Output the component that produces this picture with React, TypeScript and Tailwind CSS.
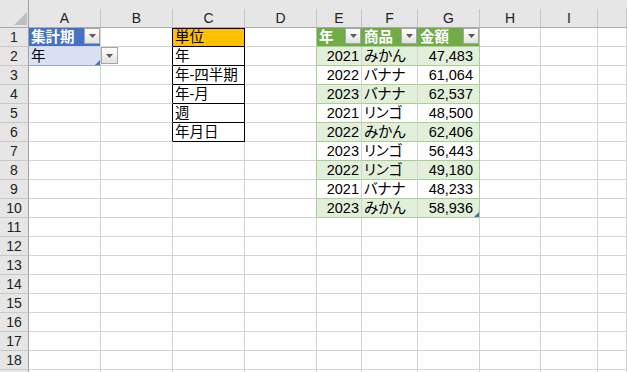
import React from "react";

const GRID =
  "grid grid-cols-[29px_72px_72px_72px_72px_45px_56px_62px_61px_57px_29px]";
const CELL =
  "relative flex items-center whitespace-nowrap overflow-hidden border-r border-b px-[2px]";
const GRIDLINE = "border-[#d4d4d4]";

// last column is only partly on screen, so no letter shows
const COLS = ["A", "B", "C", "D", "E", "F", "G", "H", "I", ""];

const units = ["単位", "年", "年-四半期", "年-月", "週", "年月日"];

const sales: [number, string, string][] = [
  [2021, "みかん", "47,483"],
  [2022, "バナナ", "61,064"],
  [2023, "バナナ", "62,537"],
  [2021, "リンゴ", "48,500"],
  [2022, "みかん", "62,406"],
  [2023, "リンゴ", "56,443"],
  [2022, "リンゴ", "49,180"],
  [2021, "バナナ", "48,233"],
  [2023, "みかん", "58,936"],
];

// small filter / list arrow button
const DropButton = ({ className }: { className: string }) => (
  <div
    className={`absolute flex items-center justify-center border border-[#a6a6a6] bg-gradient-to-b from-white to-[#e2e2e2] ${className}`}
  >
    <svg width="7" height="4" viewBox="0 0 7 4">
      <path d="M0 0h7L3.5 4z" fill="#5a5a5a" />
    </svg>
  </div>
);

// table resize corner
const Handle = ({ color }: { color: string }) => (
  <svg className="absolute right-0 bottom-0" width="5" height="5" viewBox="0 0 5 5">
    <path d="M5 0V5H0z" fill={color} />
  </svg>
);

const Cell = ({
  className = GRIDLINE,
  children,
}: {
  className?: string;
  children?: React.ReactNode;
}) => <div className={`${CELL} ${className}`}>{children}</div>;

const RowHead = ({ n }: { n?: number }) => (
  <div className="flex items-center justify-center bg-[#e6e6e6] border-r border-b border-r-[#9f9f9f] border-b-[#c8c8c8] text-[14px] text-[#222]">
    {n}
  </div>
);

function Row({ r }: { r: number }) {
  const unit = r <= 6 ? units[r - 1] : undefined;
  const inTable = r <= 10;
  const item = r >= 2 && r <= 10 ? sales[r - 2] : undefined;
  const band = r % 2 === 0;

  // column A
  let a: React.ReactNode = <Cell />;
  if (r === 1)
    a = (
      <Cell className="bg-[#4472c4] border-[#d4d4d4] text-white font-bold">
        集計期
        <DropButton className="right-0 top-0 w-[16px] h-[16px]" />
      </Cell>
    );
  if (r === 2)
    a = (
      <Cell className="bg-[#d9e1f2] border-r-[#d4d4d4] border-b-[#8ea9db]">
        年
        <Handle color="#4472c4" />
      </Cell>
    );

  // column B (right edge is the left side of the unit list box)
  const b = (
    <Cell className={r <= 6 ? "border-r-black border-b-[#d4d4d4]" : GRIDLINE}>
      {r === 2 && <DropButton className="left-0 top-0 w-[17px] h-[17px]" />}
    </Cell>
  );

  // column C
  let c: React.ReactNode = <Cell />;
  if (r === 1) c = <Cell className="bg-[#ffc000] border-black border-t">{unit}</Cell>;
  else if (unit) c = <Cell className="border-black">{unit}</Cell>;

  // column D
  const d = (
    <Cell className={inTable ? "border-r-[#a9d08e] border-b-[#d4d4d4]" : GRIDLINE} />
  );

  // columns E-G
  let e: React.ReactNode = <Cell />;
  let f: React.ReactNode = <Cell />;
  let g: React.ReactNode = <Cell />;
  if (r === 1) {
    const head = "bg-[#70ad47] border-r-[#70ad47] border-b-[#a9d08e] text-white font-bold";
    e = (
      <Cell className={head}>
        年
        <DropButton className="right-0 top-0 w-[16px] h-[16px]" />
      </Cell>
    );
    f = (
      <Cell className={head}>
        商品
        <DropButton className="right-0 top-0 w-[16px] h-[16px]" />
      </Cell>
    );
    g = (
      <Cell className="bg-[#70ad47] border-r-[#a9d08e] border-b-[#a9d08e] text-white font-bold">
        金額
        <DropButton className="right-0 top-0 w-[16px] h-[16px]" />
      </Cell>
    );
  } else if (item) {
    const fill = band ? "bg-[#e2efda]" : "bg-white";
    e = (
      <Cell className={`${fill} justify-end border-r-[#d4d4d4] border-b-[#a9d08e]`}>
        {item[0]}
      </Cell>
    );
    f = <Cell className={`${fill} border-r-[#d4d4d4] border-b-[#a9d08e]`}>{item[1]}</Cell>;
    g = (
      <Cell className={`${fill} justify-end pr-[6px] border-r-[#a9d08e] border-b-[#a9d08e]`}>
        {item[2]}
        {r === 10 && <Handle color="#4472c4" />}
      </Cell>
    );
  }

  return (
    <div className={`${GRID} h-[19px]`}>
      <RowHead n={r <= 18 ? r : undefined} />
      {a}
      {b}
      {c}
      {d}
      {e}
      {f}
      {g}
      <Cell />
      <Cell />
      <Cell />
    </div>
  );
}

export default function App() {
  const rows = Array.from({ length: 19 }, (_, i) => i + 1);
  return (
    <div className="w-[627px] h-[372px] overflow-hidden bg-white text-black text-[14.5px] leading-none font-['Liberation_Sans','Noto_Sans_CJK_JP',sans-serif] [font-feature-settings:'palt']">
      {/* column letters */}
      <div className={`${GRID} h-[28px] bg-[#e6e6e6]`}>
        <div className="relative border-r border-b border-r-[#9f9f9f] border-b-[#ababab]">
          <svg className="absolute left-[14px] top-[12px]" width="13" height="13" viewBox="0 0 13 13">
            <path d="M13 0V13H0z" fill="#bfbfbf" />
          </svg>
        </div>
        {COLS.map((col, i) => (
          <div key={i} className="flex flex-col justify-end border-b border-[#ababab]">
            <div className="h-[18px] flex items-center justify-center border-r border-[#c6c6c6] text-[14px] text-[#222]">
              {col}
            </div>
          </div>
        ))}
      </div>
      {rows.map((r) => (
        <Row key={r} r={r} />
      ))}
    </div>
  );
}
